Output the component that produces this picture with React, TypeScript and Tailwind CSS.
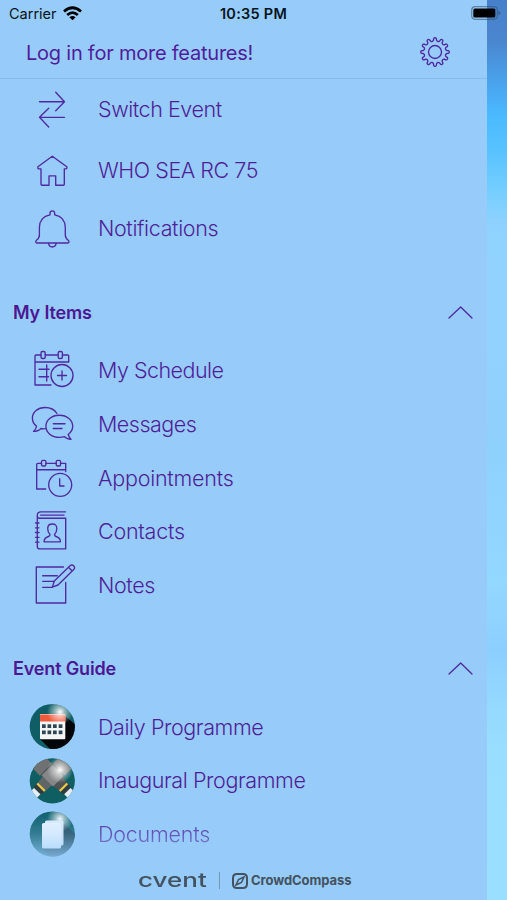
import type { ReactNode } from "react";

function Glyph({ box, className, children }: { box: string; className: string; children: ReactNode }) {
  return (
    <svg viewBox={box} className={`shrink-0 text-[#5029a0] ${className}`} fill="none" stroke="currentColor" strokeWidth="1.35" strokeLinecap="round" strokeLinejoin="round">
      {children}
    </svg>
  );
}

const rowIcon = "h-12 w-12";

function gearPath() {
  const teeth = 12;
  const step = (Math.PI * 2) / teeth;
  const point = (r: number, a: number) => `${(Math.sin(a) * r).toFixed(2)} ${(-Math.cos(a) * r).toFixed(2)}`;
  let d = "";
  for (let i = 0; i < teeth; i++) {
    const a = i * step;
    d += `${i ? "L" : "M"}${point(11.8, a - step * 0.25)}L${point(13.2, a - step * 0.2)}Q${point(14.5, a - step * 0.15)} ${point(14.2, a)}Q${point(14.5, a + step * 0.15)} ${point(13.2, a + step * 0.2)}L${point(11.8, a + step * 0.25)}Q${point(10, a + step * 0.5)} ${point(11.8, a + step * 0.75)}`;
  }
  return d + "Z";
}

function Row({ icon, label, className }: { icon: ReactNode; label: string; className: string }) {
  return (
    <div className={`flex items-center gap-[22px] pl-7 ${className}`}>
      {icon}
      <span className="whitespace-nowrap">{label}</span>
    </div>
  );
}

function SectionHeader({ title, className }: { title: string; className: string }) {
  return (
    <div className={`flex h-[54px] shrink-0 items-center justify-between pr-[14px] pl-[13px] ${className}`}>
      <h2 className="pb-px text-[18px] font-semibold tracking-[-0.15px] text-[#4b1793]">{title}</h2>
      <Glyph box="448 301 25 24" className="h-6 w-[25px]">
        <path d="M449 318L460.7 307L472 318" />
      </Glyph>
    </div>
  );
}

function Shine({ id, cx, cy }: { id: string; cx: number; cy: number }) {
  return (
    <radialGradient id={id} gradientUnits="userSpaceOnUse" cx={cx} cy={cy} r="13">
      <stop offset="0" stopColor="#fff" stopOpacity="1" />
      <stop offset="0.35" stopColor="#fff" stopOpacity="0.58" />
      <stop offset="1" stopColor="#fff" stopOpacity="0" />
    </radialGradient>
  );
}

function CalendarBadge() {
  return (
    <svg viewBox="0 0 48 48" className="h-12 w-12 shrink-0">
      <defs>
        <Shine id="shineA" cx={32} cy={9} />
        <clipPath id="roundA"><circle cx="24.3" cy="23.5" r="22.6" /></clipPath>
      </defs>
      <g clipPath="url(#roundA)">
        <rect width="48" height="48" fill="#0f5e66" />
        <path d="M37 13L48 22V48H24L12 36Z" fill="#030608" />
        <rect x="12" y="11" width="25.3" height="25.2" rx="1" fill="#f4f6f6" />
        <path d="M12 12.500Q12 11.500 13 11.500H36.300Q37.300 11.500 37.300 12.500V18.500H12Z" fill="#ee5a3c" />
        {[21.3, 27.5].map((y) => [14, 19.5, 25, 30.7].map((x) => <rect key={`${x}-${y}`} x={x} y={y} width="3.7" height="3.7" fill="#2d4653" />))}
        <rect width="48" height="48" fill="url(#shineA)" />
      </g>
    </svg>
  );
}

function Microphone({ angle, body }: { angle: number; body: string }) {
  return (
    <g transform={`rotate(${angle} 24.3 19)`}>
      <rect x="15.800" y="-7" width="17" height="17" fill="#6f7172" />
      <path d="M16.500 10H32.100L29.600 37H19Z" fill={body} />
      <rect x="18.800" y="36" width="11" height="2.300" fill="#343a3e" />
      <rect x="19" y="38.300" width="10.600" height="2.200" fill="#e8cb45" transform="translate(0 -4.500)" />
      <rect x="19.300" y="38.300" width="10" height="2" fill="#343a3e" />
      <rect x="19.800" y="40.300" width="9" height="7" fill="#e4edf2" />
    </g>
  );
}

function MicrophonesBadge() {
  return (
    <svg viewBox="0 0 48 48" className="h-12 w-12 shrink-0">
      <defs>
        <Shine id="shineB" cx={32} cy={13} />
        <clipPath id="roundB"><circle cx="24.3" cy="23.8" r="22.6" /></clipPath>
      </defs>
      <g clipPath="url(#roundB)">
        <rect width="48" height="48" fill="#0f5e62" />
        <Microphone angle={-45} body="#505354" />
        <Microphone angle={45} body="#626566" />
        <rect x="16.300" y="11" width="16" height="15" fill="#848687" transform="rotate(45 24.300 19)" />
        <rect width="48" height="48" fill="url(#shineB)" />
      </g>
    </svg>
  );
}

function DocumentsBadge() {
  return (
    <svg viewBox="0 0 48 48" className="h-12 w-12 shrink-0">
      <defs>
        <Shine id="shineC" cx={32} cy={9} />
        <clipPath id="roundC"><circle cx="24.3" cy="24" r="22.6" /></clipPath>
      </defs>
      <g clipPath="url(#roundC)">
        <rect width="48" height="48" fill="#0b5c68" />
        <path d="M36 14L48 25V48H23L14 39Z" fill="#123c4b" />
        <rect width="48" height="48" fill="url(#shineC)" />
        <rect x="17" y="10.500" width="18.500" height="25" rx="1.500" fill="#e3effb" />
        <rect x="14" y="13" width="19" height="25.500" rx="1.500" fill="#eef6ff" />
      </g>
    </svg>
  );
}

function StatusBar() {
  return (
    <div className="flex h-[27px] w-full shrink-0 items-center justify-between pr-[6px] pl-[9px] text-[#081420]">
      <div className="flex w-[119px] items-center gap-[6px]">
        <span className="text-[14.5px]">Carrier</span>
        <svg viewBox="0 0 19 15" className="mb-px h-[15px] w-[19px]" fill="none" stroke="#000" strokeWidth="2.700">
          <path d="M1 5.500Q9.500 -2 18 5.500" />
          <path d="M4.200 9Q9.500 4.200 14.800 9" />
          <path d="M6.400 11.300Q9.500 8.700 12.600 11.300L9.500 14.200Z" fill="#000" stroke="none" />
        </svg>
      </div>
      <span className="text-[14.5px] font-semibold tracking-[0.25px]">10:35 PM</span>
      <div className="flex w-[122px] justify-end">
        <svg viewBox="0 0 30 14" className="mb-px h-[14px] w-[30px]">
          <rect x="0.700" y="0.700" width="25.600" height="12.600" rx="3.500" fill="none" stroke="#36536d" strokeOpacity="0.6" strokeWidth="1.200" />
          <rect x="2.300" y="2.600" width="22" height="8.800" rx="1.500" fill="#000" />
          <path d="M27.500 4.700Q29.700 5.600 29.700 7T27.500 9.300Z" fill="#36536d" fillOpacity="0.7" />
        </svg>
      </div>
    </div>
  );
}

export default function App() {
  return (
    <div className="flex h-[900px] w-[507px] flex-col overflow-hidden bg-[linear-gradient(to_right,#97ccfa_487.5px,transparent_487.5px),linear-gradient(to_bottom,#4680cb_0,#4a86ce_40px,#4a9ee8_75px,#4abaff_115px,#58c2ff_150px,#74ceff_190px,#90d2ff_225px,#92d2ff_330px,#8fd0fd_430px,#90d4ff_510px,#93d8ff_580px,#8ccfff_650px,#94d8ff_700px,#99deff_750px,#9adfff_900px)] font-['Inter','Liberation_Sans',sans-serif]">
      <StatusBar />
      <nav className="flex w-[487px] flex-1 flex-col text-[21.5px] font-light text-[#4f1f98]">
        <header className="flex h-[52px] shrink-0 items-center justify-between border-b border-[#86bbea] pr-9 pl-[26px]">
          <span className="text-[20px] font-normal tracking-[-0.23px] text-[#501c9b]">Log in for more features!</span>
          <Glyph box="-16 -16 32 32" className="mb-px h-8 w-8">
            <path d={gearPath()} />
            <circle r="6.500" />
          </Glyph>
        </header>

        <Row className="h-[61px] tracking-[-0.44px]" label="Switch Event" icon={
          <Glyph box="28 86 48 48" className={rowIcon}>
            <path d="M39.500 101.700H64.300M55.700 92.300L64.500 101.700L55.700 110.700M64.500 117.300H39.500M48.700 108.300L39.500 117.300L48.700 127" />
          </Glyph>
        } />
        <Row className="h-[61px] tracking-[-0.45px]" label="WHO SEA RC 75" icon={
          <Glyph box="28 146.500 48 48" className={rowIcon}>
            <path d="M52.300 155.800L37.900 166.300Q37.500 168.300 39 168.300H41V183.700Q41 184.700 42 184.700H49V175.300H55.700V184.700H63.300Q64.300 184.700 64.300 183.700V168.300H65.800Q67.300 168.300 66.800 166.300Z" />
          </Glyph>
        } />
        <Row className="h-[55px] tracking-[-0.36px]" label="Notifications" icon={
          <Glyph box="28 204.500 48 48" className={rowIcon}>
            <path d="M50 214.300V212.800Q50 210.300 52.300 210.300T54.700 212.800V214.300C61.500 215.500 65.300 220.500 65.300 227V234.500Q65.300 237.500 68.500 240Q69.700 242.300 67.700 242.500H37Q35 242.300 36.200 240Q39.400 237.500 39.400 234.500V227C39.400 220.500 43.200 215.500 50 214.300ZM48.500 242.700Q49 246.500 52.300 246.500T56.200 242.700" />
          </Glyph>
        } />

        <SectionHeader title="My Items" className="mt-[30px]" />
        <div className="mt-[3px] flex flex-col">
          <Row className="h-[54px] tracking-[-0.52px]" label="My Schedule" icon={
            <Glyph box="28 346 48 48" className={rowIcon}>
              <path d="M41 355H36Q35 355 35 356V385H51M45.200 355H58M62.500 355H67.700Q68.700 355 68.700 356V362H35M46.700 365V381M39 369.200H49M39 376.700H48.500M62 371V380M57.500 375.500H66.500" />
              <rect x="41" y="351.500" width="4.200" height="7" rx="1.500" />
              <rect x="58.200" y="351.500" width="4.200" height="7" rx="1.500" />
              <circle cx="62" cy="375.500" r="11" />
            </Glyph>
          } />
          <Row className="h-[54px] tracking-[-0.5px]" label="Messages" icon={
            <Glyph box="28 400 48 48" className={rowIcon}>
              <path d="M57 413.500C54.500 409.500 50 407.500 45 407.500C38 407.500 32.400 412 32.400 418C32.400 421.500 34 424.300 36.500 426Q36.300 429 33.500 431.400Q38.500 431.400 41 428.500Q43 429 45.200 428.700" />
              <path d="M68.200 434.500Q69 437.500 71 439.300Q66.500 439 64.500 436.600Q62 437.400 59.300 437.400C51.500 437.400 45.900 432.500 45.900 426.300S51.500 415.200 59.300 415.200S72.700 420.200 72.700 426.300C72.700 429.500 71 432.500 68.200 434.500ZM53.300 423.700H65M53.300 428.500H62" />
            </Glyph>
          } />
          <Row className="h-[54px] tracking-[-0.24px]" label="Appointments" icon={
            <Glyph box="28 454 48 48" className={rowIcon}>
              <path d="M41.500 463.300H37.700Q36.700 463.300 36.700 464.300V489H45.700M46 463.300H56.300M60.500 463.300H65.700V471.500M36.700 469.700H65.700M59.700 478.700V486H64" />
              <rect x="41.500" y="460.300" width="4.400" height="5.700" rx="1.500" />
              <rect x="56.200" y="460.300" width="4.400" height="5.700" rx="1.500" />
              <circle cx="60.200" cy="484.800" r="11.500" />
            </Glyph>
          } />
          <Row className="h-[53px] tracking-[-0.25px]" label="Contacts" icon={
            <Glyph box="28 507.500 48 48" className={rowIcon}>
              <path d="M65.500 511.400H41Q37.300 511.400 37.300 515V546Q37.300 548.400 39.700 548.400H65.700V517.700H39.500Q37.300 517.700 37.300 515.500M40.500 514.600H64M35.500 522.500H39M35.500 527.300H39M35.500 532H39M35.500 536.800H39M35.500 541.600H39" />
              <path d="M50 534C48.500 532.500 47.700 530 47.700 528Q47.700 523.500 52.300 523.500T56.800 528C56.800 530 56 532.500 54.500 534Q54.500 535.500 56 536C59 537 60.500 538.500 60.400 541.300H44.100C44 538.500 45.500 537 48.500 536Q50 535.500 50 534Z" />
            </Glyph>
          } />
          <Row className="h-[54px] tracking-[-0.35px]" label="Notes" icon={
            <Glyph box="28 561 48 48" className={rowIcon}>
              <path d="M63.500 567H36.300V603H65.700V582.500M42.700 575.700H57.300M42.700 581.300H54M42.700 587.300H52" />
              <path d="M52.300 587.200L54.300 581L70.300 565.500Q72 564.300 73.700 565.800Q75.300 567.500 74 569.200L58 585ZM68.500 567.200L72.200 571" />
            </Glyph>
          } />
        </div>

        <SectionHeader title="Event Guide" className="mt-[30px]" />
        <div className="mt-[4px] flex flex-col">
          <Row className="h-[54px] tracking-[-0.41px]" label="Daily Programme" icon={<CalendarBadge />} />
          <Row className="h-[53px] tracking-[-0.4px]" label="Inaugural Programme" icon={<MicrophonesBadge />} />
          <Row className="h-[54px] tracking-[-0.22px] [mask-image:linear-gradient(to_bottom,#000_5%,rgba(0,0,0,0.7)_50%,rgba(0,0,0,0.2)_95%)]" label="Documents" icon={<DocumentsBadge />} />
        </div>

        <footer className="flex flex-1 items-center pl-[138px] text-[#435260]">
          <span className="inline-block w-[69px] origin-left scale-x-[1.37] text-[19px] leading-none font-medium">cvent</span>
          <span className="ml-[12px] h-[17px] w-px bg-[#7496b5]" />
          <svg viewBox="0 0 16 16" className="ml-[12px] h-4 w-4" fill="none" stroke="currentColor" strokeWidth="2">
            <path d="M5 1.100H11Q15 1.100 15 5V11Q15 15 11 15H5Q1 15 1 11V5Q1 1.100 5 1.100Z" />
            <path d="M12 4L6.500 6.500L4 12L9.500 9.500Z" strokeWidth="1.500" />
          </svg>
          <span className="ml-[3px] text-[13px] font-bold tracking-[-0.08px]">CrowdCompass</span>
        </footer>
      </nav>
    </div>
  );
}
